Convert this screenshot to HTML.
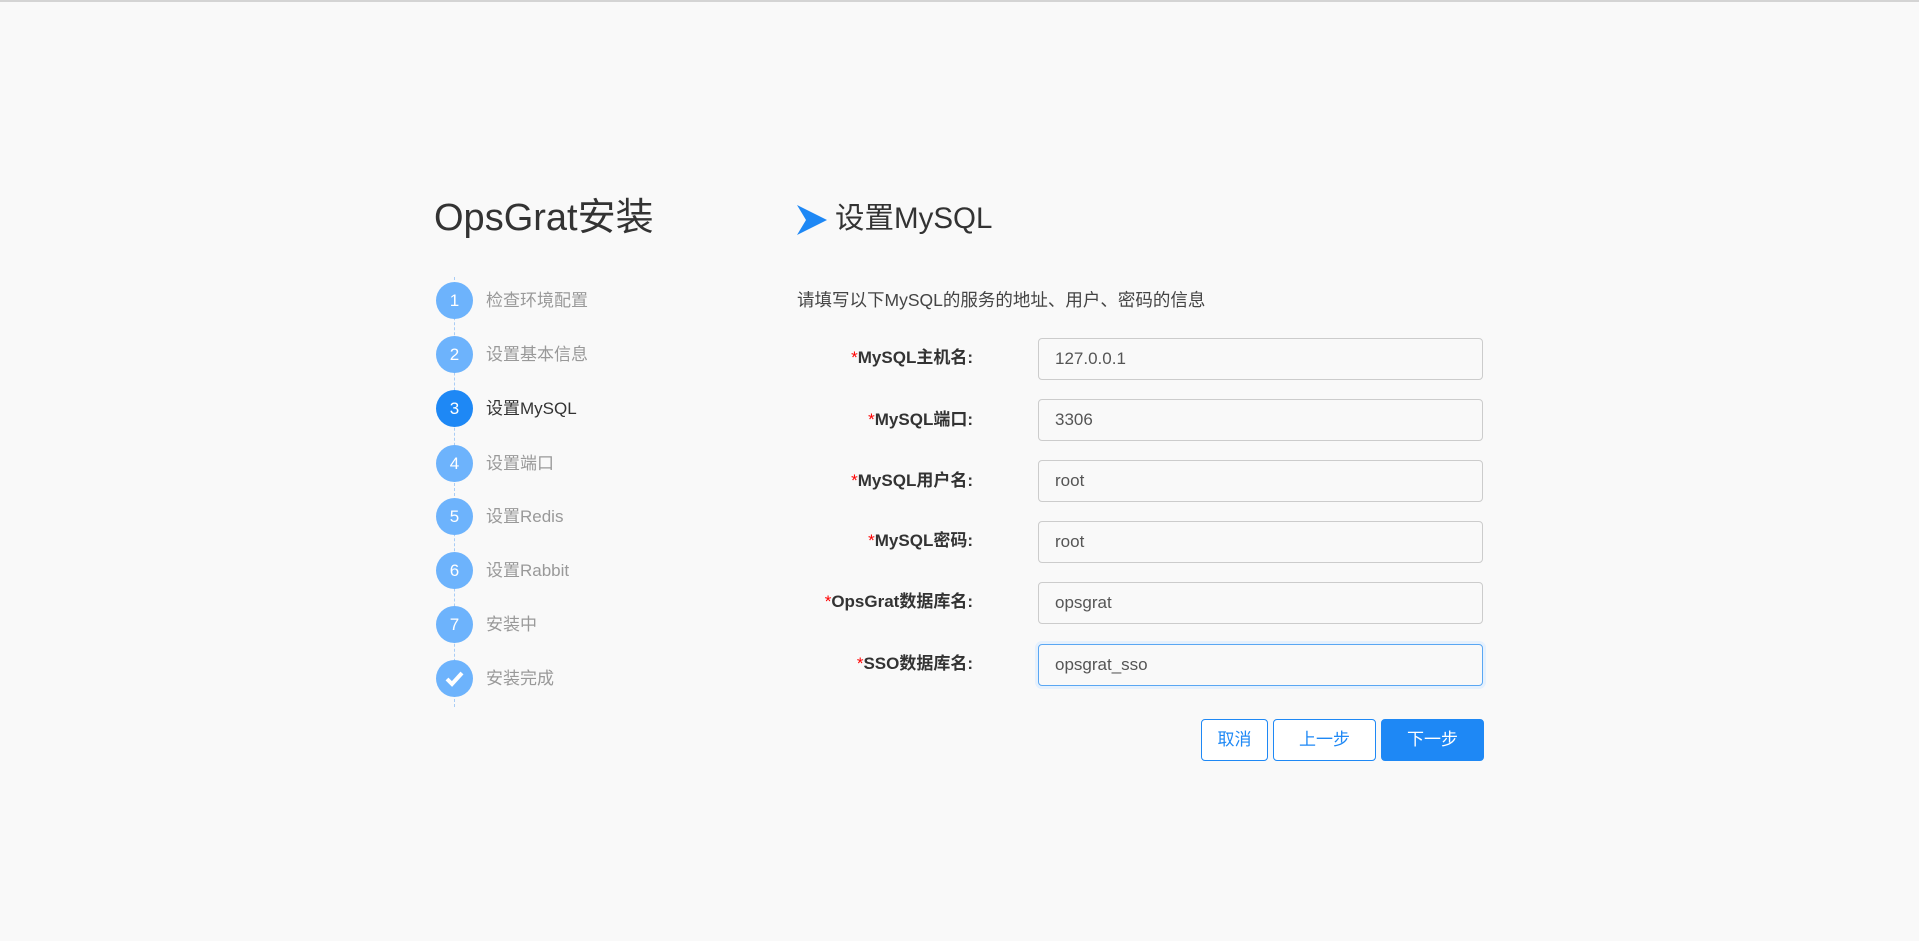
<!DOCTYPE html><html><head><meta charset="utf-8"><style>
*{box-sizing:border-box;margin:0;padding:0}
body{width:1919px;height:941px;background:#f9f9f9;font-family:"Liberation Sans","Noto Sans CJK SC",sans-serif;position:relative;overflow:hidden;border-top:2px solid #d4d4d4}
.a{position:absolute}
.title{left:434px;top:194px;font-size:38px;color:#333;line-height:44px}
.line{left:454px;top:275px;height:430px;border-left:1px dashed #a9cdf6}
.c{width:37px;height:37px;border-radius:50%;background:#6db3fc;color:#fff;font-size:17px;text-align:center;line-height:37px;left:436px}
.c.on{background:#1e88f5}
.st{left:486px;font-size:17px;color:#999;line-height:24px}
.st.on{color:#333}
.h{left:835px;top:198px;font-size:29.5px;color:#333;line-height:38px}
.desc{left:797px;top:285px;font-size:17.5px;color:#444}
.lab{right:946px;font-size:17px;font-weight:bold;color:#333;line-height:24px;text-align:right}
.lab i{color:#f00;font-style:normal;font-weight:normal}
.in{left:1038px;width:445px;height:42px;border:1px solid #ccc;border-radius:4px;background:#f9f9f9;padding-left:16px;font-size:17px;line-height:40px;color:#555}
.in.f{border-color:#5aa7f3;box-shadow:0 0 0 3px #e6f1fd}
.b{top:717px;height:42px;border:1px solid #1e88f5;border-radius:4px;color:#1e88f5;font-size:17px;text-align:center;line-height:40px;background:#fff}
</style></head><body>
<div class="a title">OpsGrat安装</div>
<div class="a line"></div>
<div class="a c" style="top:280px">1</div><div class="a st" style="top:287px">检查环境配置</div>
<div class="a c" style="top:334px">2</div><div class="a st" style="top:341px">设置基本信息</div>
<div class="a c on" style="top:388px">3</div><div class="a st on" style="top:395px">设置MySQL</div>
<div class="a c" style="top:443px">4</div><div class="a st" style="top:450px">设置端口</div>
<div class="a c" style="top:496px">5</div><div class="a st" style="top:503px">设置Redis</div>
<div class="a c" style="top:550px">6</div><div class="a st" style="top:557px">设置Rabbit</div>
<div class="a c" style="top:604px">7</div><div class="a st" style="top:611px">安装中</div>
<div class="a c" style="top:658px"><svg width="37" height="37" viewBox="0 0 37 37"><path d="M11 19l5 5 10-11" stroke="#fff" stroke-width="4" fill="none"/></svg></div><div class="a st" style="top:665px">安装完成</div>
<svg class="a" style="left:797px;top:203px" width="30" height="30" viewBox="0 0 30 30"><path d="M0 0L30 15L0 30L9 15Z" fill="#1e88f5"/></svg>
<div class="a h">设置MySQL</div>
<div class="a desc">请填写以下MySQL的服务的地址、用户、密码的信息</div>
<div class="a lab" style="top:344px"><i>*</i>MySQL主机名:</div><div class="a in" style="top:336px">127.0.0.1</div>
<div class="a lab" style="top:406px"><i>*</i>MySQL端口:</div><div class="a in" style="top:397px">3306</div>
<div class="a lab" style="top:467px"><i>*</i>MySQL用户名:</div><div class="a in" style="top:458px">root</div>
<div class="a lab" style="top:527px"><i>*</i>MySQL密码:</div><div class="a in" style="top:519px">root</div>
<div class="a lab" style="top:588px"><i>*</i>OpsGrat数据库名:</div><div class="a in" style="top:580px">opsgrat</div>
<div class="a lab" style="top:650px"><i>*</i>SSO数据库名:</div><div class="a in f" style="top:642px">opsgrat_sso</div>
<div class="a b" style="left:1201px;width:67px">取消</div>
<div class="a b" style="left:1273px;width:103px">上一步</div>
<div class="a b" style="left:1381px;width:103px;background:#1e88f5;color:#fff">下一步</div>
</body></html>
